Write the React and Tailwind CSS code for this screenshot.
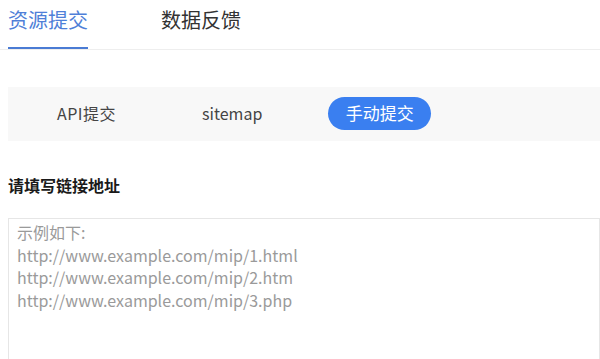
import React from "react";

const placeholder = `示例如下:
http://www.example.com/mip/1.html
http://www.example.com/mip/2.htm
http://www.example.com/mip/3.php`;

export default function App() {
  return (
    <div className="h-[359px] w-[600px] overflow-hidden bg-white font-['Noto_Sans_CJK_SC','Liberation_Sans',sans-serif]">
      <div className="flex border-b border-[#eeeeee] pl-2">
        <div className="flex h-[49px] flex-col justify-between">
          <span className="pt-[8px] text-[20px] leading-[24px] text-[#4f7fd8]">资源提交</span>
          <span className="h-[2px] w-[80px] bg-[#4a7bd4]" />
        </div>
        <div className="ml-[73px] pt-[8px] text-[20px] leading-[24px] text-[#333333]">数据反馈</div>
      </div>

      <div className="ml-2 mt-[37px] flex h-[54px] items-center bg-[#f8f8f8] text-[16px] text-[#444444]">
        <span className="ml-[49px] mb-[3px] tracking-[0.5px]">API提交</span>
        <span className="ml-[86px] mb-[3px]">sitemap</span>
        <span className="ml-[66px] mb-[2px] flex h-[33px] w-[103px] items-center justify-center rounded-full bg-[#3a7ff0] text-[17px] text-white">
          手动提交
        </span>
      </div>

      <div className="ml-2 mt-[32px] text-[16px] font-bold leading-[24px] text-[#1a1a1a]">请填写链接地址</div>

      <div className="ml-2 mt-[21px] h-[200px] border border-[#e6e6e6] px-[8px] pt-[2px]">
        <pre className="font-['Noto_Sans_CJK_SC','Liberation_Sans',sans-serif] text-[16px] leading-[22.5px] text-[#9a9a9a]">
          {placeholder}
        </pre>
      </div>
    </div>
  );
}
